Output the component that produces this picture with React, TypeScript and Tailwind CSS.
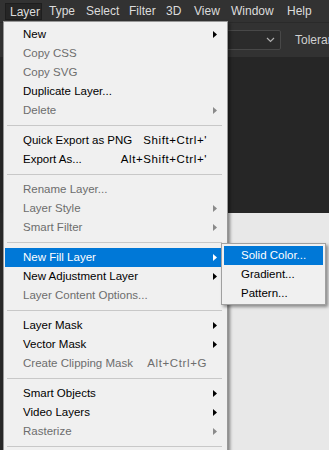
import React from "react";

type Item =
  | { type: "sep" }
  | { type: "item"; label: string; disabled?: boolean; arrow?: boolean; shortcut?: string; active?: boolean };

const items: Item[] = [
  { type: "item", label: "New", arrow: true },
  { type: "item", label: "Copy CSS", disabled: true },
  { type: "item", label: "Copy SVG", disabled: true },
  { type: "item", label: "Duplicate Layer..." },
  { type: "item", label: "Delete", disabled: true, arrow: true },
  { type: "sep" },
  { type: "item", label: "Quick Export as PNG", shortcut: "Shift+Ctrl+'" },
  { type: "item", label: "Export As...", shortcut: "Alt+Shift+Ctrl+'" },
  { type: "sep" },
  { type: "item", label: "Rename Layer...", disabled: true },
  { type: "item", label: "Layer Style", disabled: true, arrow: true },
  { type: "item", label: "Smart Filter", disabled: true, arrow: true },
  { type: "sep" },
  { type: "item", label: "New Fill Layer", arrow: true, active: true },
  { type: "item", label: "New Adjustment Layer", arrow: true },
  { type: "item", label: "Layer Content Options...", disabled: true },
  { type: "sep" },
  { type: "item", label: "Layer Mask", arrow: true },
  { type: "item", label: "Vector Mask", arrow: true },
  { type: "item", label: "Create Clipping Mask", disabled: true, shortcut: "Alt+Ctrl+G" },
  { type: "sep" },
  { type: "item", label: "Smart Objects", arrow: true },
  { type: "item", label: "Video Layers", arrow: true },
  { type: "item", label: "Rasterize", disabled: true, arrow: true },
  { type: "sep" },
];

function Arrow({ color }: { color: string }) {
  return (
    <svg width="4" height="7" viewBox="0 0 4 7" className="block">
      <polygon points="0,0 4,3.5 0,7" fill={color} />
    </svg>
  );
}

export default function App() {
  const font = { fontFamily: "'Liberation Sans', Arial, sans-serif" };
  return (
    <div className="relative w-[329px] h-[450px] overflow-hidden bg-[#282828] text-[11.5px]" style={font}>
      {/* Menu bar */}
      <div className="h-[23px] bg-[#323232] flex items-center text-[#dcdcdc] text-[12px] border-b border-[#2a2a2a] whitespace-nowrap">
        <div className="ml-[5px] w-[37px] h-[17px] pl-[4px] flex items-center bg-[#262626] border border-[#1e1e1e] mt-[1px] shrink-0">Layer</div>
        <div className="w-[44px] pl-[7px] shrink-0">Type</div>
        <div className="w-[43px] shrink-0">Select</div>
        <div className="w-[37px] shrink-0">Filter</div>
        <div className="w-[28px] shrink-0">3D</div>
        <div className="w-[37px] shrink-0">View</div>
        <div className="w-[56px] shrink-0">Window</div>
        <div className="shrink-0">Help</div>
      </div>
      {/* Options bar */}
      <div className="h-[34px] bg-[#323232] flex items-center text-[#d0d0d0] overflow-hidden">
        <div className="ml-[225px] w-[56px] h-[20px] shrink-0 bg-[#2b2b2b] border border-[#484848] rounded-[2px] flex items-center justify-end pr-[5px]">
          <svg width="9" height="6" viewBox="0 0 9 6">
            <polyline points="1,1 4.5,4.5 8,1" fill="none" stroke="#b0b0b0" strokeWidth="1.2" />
          </svg>
        </div>
        <div className="ml-[14px] shrink-0 text-[12px] whitespace-nowrap">Tolerance</div>
      </div>
      {/* Workspace */}
      <div className="flex flex-col h-[393px]">
        <div className="h-[156px] bg-[#262626]" />
        <div className="flex-1 ml-[30px] bg-[#e8e8e8]" />
      </div>

      {/* Main dropdown menu */}
      <div className="absolute left-[3px] top-[21px] w-[225px] bg-[#f0f0f0] border border-[#979797] pt-[3px] pl-[1px] pr-[5px] pb-[20px] shadow-[2px_2px_3px_rgba(0,0,0,0.45)]">
        {items.map((it, i) =>
          it.type === "sep" ? (
            <div key={i} className="h-[11px] flex items-center pl-[2px]">
              <div className="h-px w-full bg-[#c8c8c8]" />
            </div>
          ) : (
            <div
              key={i}
              className={
                "h-[19px] flex items-center pl-[18px] pr-[5px] " +
                (it.active ? "bg-[#0078d7] text-white" : it.disabled ? "text-[#6d6d6d]" : "text-black")
              }
            >
              <span className="flex-1 whitespace-nowrap">{it.label}</span>
              {it.shortcut && <span className="mr-[10px] whitespace-nowrap tracking-[0.6px]">{it.shortcut}</span>}
              {it.arrow && <Arrow color={it.active ? "#ffffff" : it.disabled ? "#8a8a8a" : "#000000"} />}
            </div>
          )
        )}
      </div>

      {/* Submenu */}
      <div className="absolute left-[221px] top-[243px] w-[105px] h-[62px] bg-[#f0f0f0] border border-[#a0a0a0] p-[2px] shadow-[2px_2px_3px_rgba(0,0,0,0.4)]">
        <div className="h-[19px] flex items-center pl-[17px] bg-[#0078d7] text-white whitespace-nowrap">Solid Color...</div>
        <div className="h-[19px] flex items-center pl-[17px] text-black whitespace-nowrap">Gradient...</div>
        <div className="h-[19px] flex items-center pl-[17px] text-black whitespace-nowrap">Pattern...</div>
      </div>
    </div>
  );
}
